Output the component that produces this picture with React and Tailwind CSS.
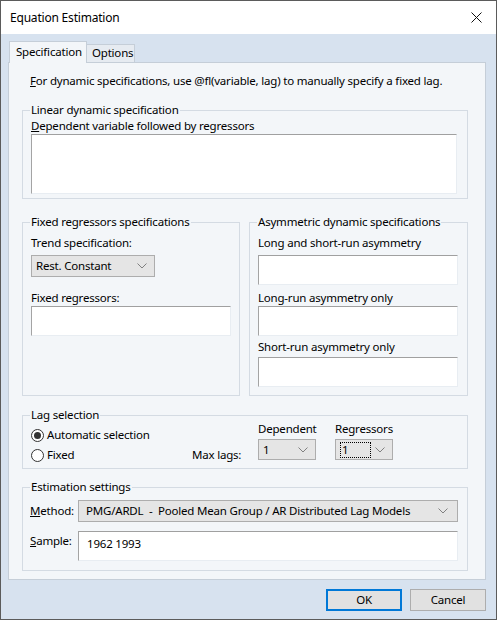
import React from "react";

// ─── Small pieces ─────────────────────────────────────────────────────────────

const Chevron = () => (
  <svg width="10" height="6" viewBox="0 0 10 6" className="shrink-0">
    <path d="M0.5 0.5 L5 5 L9.5 0.5" fill="none" stroke="#808080" strokeWidth="1" />
  </svg>
);

const Dropdown = ({ value, className = "", focus = false }) => (
  <div
    className={`flex items-center justify-between border border-[#adadad] bg-[#e5e5e5] pl-[4px] pr-[7px] ${className}`}
  >
    {focus ? (
      <span className="border border-dotted border-black pl-[1px] pr-[22px] leading-[14px]">{value}</span>
    ) : (
      <span className="leading-[16px] whitespace-pre">{value}</span>
    )}
    <Chevron />
  </div>
);

const TextBox = ({ className = "", value }) => (
  <div
    className={`border border-[#e8edf2] border-t-[#a0a0a0] border-l-[#a4a4a4] bg-white px-[8px] pt-[4px] leading-[16px] ${className}`}
  >
    {value}
  </div>
);

const Group = ({ label, className = "", children }) => (
  <div className={`relative border border-[#d4dbe3] ${className}`}>
    <span className="absolute -top-[9px] left-[7px] bg-[#f3f6f9] px-[1px] leading-[16px] whitespace-nowrap">
      {label}
    </span>
    {children}
  </div>
);

const Radio = ({ checked, label }) => (
  <div className="flex items-center h-[20px]">
    <span className="w-[13px] h-[13px] rounded-full border border-[#333] bg-white flex items-center justify-center">
      {checked && <span className="w-[7px] h-[7px] rounded-full bg-[#333]" />}
    </span>
    <span className="ml-[3px] leading-[16px]">{label}</span>
  </div>
);

const Button = ({ children, primary }) => (
  <div
    className={`w-[76px] h-[22px] flex items-center justify-center bg-[#e1e1e1] ${
      primary ? "border-2 border-[#0078d7]" : "border border-[#adadad]"
    }`}
  >
    {children}
  </div>
);

// ─── Dialog ───────────────────────────────────────────────────────────────────

export default function App() {
  return (
    <div className="w-[497px] h-[620px] border border-[#5b5b5b] bg-[#d7e2ef] flex flex-col text-[11.5px] tracking-[-0.2px] text-black font-['Noto_Sans',sans-serif]">
      {/* Title bar */}
      <div className="h-[33px] bg-white flex items-center justify-between pl-[9px] pr-[14px] shrink-0">
        <span className="leading-[16px] text-[12px]">Equation Estimation</span>
        <svg width="11" height="11" viewBox="0 0 11 11">
          <path d="M0.5 0.5 L10.5 10.5 M10.5 0.5 L0.5 10.5" stroke="#111" strokeWidth="1" />
        </svg>
      </div>

      <div className="flex-1 flex flex-col pl-[7px] pr-[10px]">
        {/* Tabs */}
        <div className="flex items-end mt-[7px] h-[21px] pl-[1px] relative z-10">
          <div className="h-[22px] w-[78px] border border-b-0 border-[#c5ced8] bg-[#f3f6f9] pl-[6px] pt-[2px] leading-[16px] -mb-[1px]">
            Specification
          </div>
          <div className="h-[18px] w-[48px] border border-l-0 border-b-0 border-[#c5ced8] bg-[#e6ebf1] pl-[5px] leading-[16px]">
            Options
          </div>
        </div>

        {/* Pane */}
        <div className="h-[518px] border border-[#c5ced8] bg-[#f3f6f9] pt-[10px] pl-[13px] pr-[17px] flex flex-col">
          <p className="leading-[16px] pl-[8px] whitespace-nowrap">
            <span className="underline">F</span>or dynamic specifications, use @fl(variable, lag) to manually specify a fixed lag.
          </p>

          {/* Linear dynamic specification */}
          <Group label="Linear dynamic specification" className="mt-[21px] h-[89px] pl-[8px] pr-[10px] pt-[7px]">
            <div className="leading-[16px]">
              <span className="underline">D</span>ependent variable followed by regressors
            </div>
            <TextBox className="h-[60px]" />
          </Group>

          {/* Fixed + Asymmetric */}
          <div className="flex mt-[23px] h-[174px]">
            <Group label="Fixed regressors specifications" className="w-[218px] pl-[8px] pr-[8px] pt-[12px]">
              <div className="leading-[16px]">Trend specification:</div>
              <Dropdown value="Rest. Constant" className="w-[124px] h-[22px] mt-[4px]" />
              <div className="leading-[16px] mt-[13px]">Fixed regressors:</div>
              <TextBox className="h-[30px]" />
            </Group>
            <Group label="Asymmetric dynamic specifications" className="ml-[9px] w-[219px] pl-[8px] pr-[9px] pt-[12px]">
              <div className="leading-[16px]">Long and short-run asymmetry</div>
              <TextBox className="h-[30px] mt-[4px]" />
              <div className="leading-[16px] mt-[5px]">Long-run asymmetry only</div>
              <TextBox className="h-[30px]" />
              <div className="leading-[16px] mt-[3px]">Short-run asymmetry only</div>
              <TextBox className="h-[30px] mt-[2px]" />
            </Group>
          </div>

          {/* Lag selection */}
          <Group label="Lag selection" className="mt-[19px] h-[54px] pl-[8px] pt-[5px]">
            <div className="flex items-start">
              <div className="w-[161px] mt-[4px]">
                <Radio checked label="Automatic selection" />
                <Radio label="Fixed" />
              </div>
              <div className="w-[66px] mt-[26px] leading-[16px]">Max lags:</div>
              <div className="w-[58px]">
                <div className="leading-[16px]">Dependent</div>
                <Dropdown value="1" className="h-[21px] mt-[2px]" />
              </div>
              <div className="w-[58px] ml-[19px]">
                <div className="leading-[16px]">Regressors</div>
                <Dropdown value="1" focus className="h-[21px] mt-[2px] pl-[2px]" />
              </div>
            </div>
          </Group>

          {/* Estimation settings */}
          <Group label="Estimation settings" className="mt-[18px] h-[84px] pl-[7px] pr-[9px] pt-[12px]">
            <div className="flex items-center">
              <span className="w-[48px] leading-[16px]">
                <span className="underline">M</span>ethod:
              </span>
              <Dropdown
                value="PMG/ARDL  -  Pooled Mean Group / AR Distributed Lag Models"
                className="flex-1 h-[22px] pl-[7px] pr-[9px]"
              />
            </div>
            <div className="flex items-start mt-[9px]">
              <span className="w-[48px] leading-[16px] mt-[2px]">
                <span className="underline">S</span>ample:
              </span>
              <TextBox className="flex-1 h-[30px] pt-[3px] px-[6px]" value="1962 1993" />
            </div>
          </Group>
        </div>

        {/* Buttons */}
        <div className="flex justify-end gap-[8px] mt-[9px]">
          <Button primary>OK</Button>
          <Button>Cancel</Button>
        </div>
      </div>
    </div>
  );
}
